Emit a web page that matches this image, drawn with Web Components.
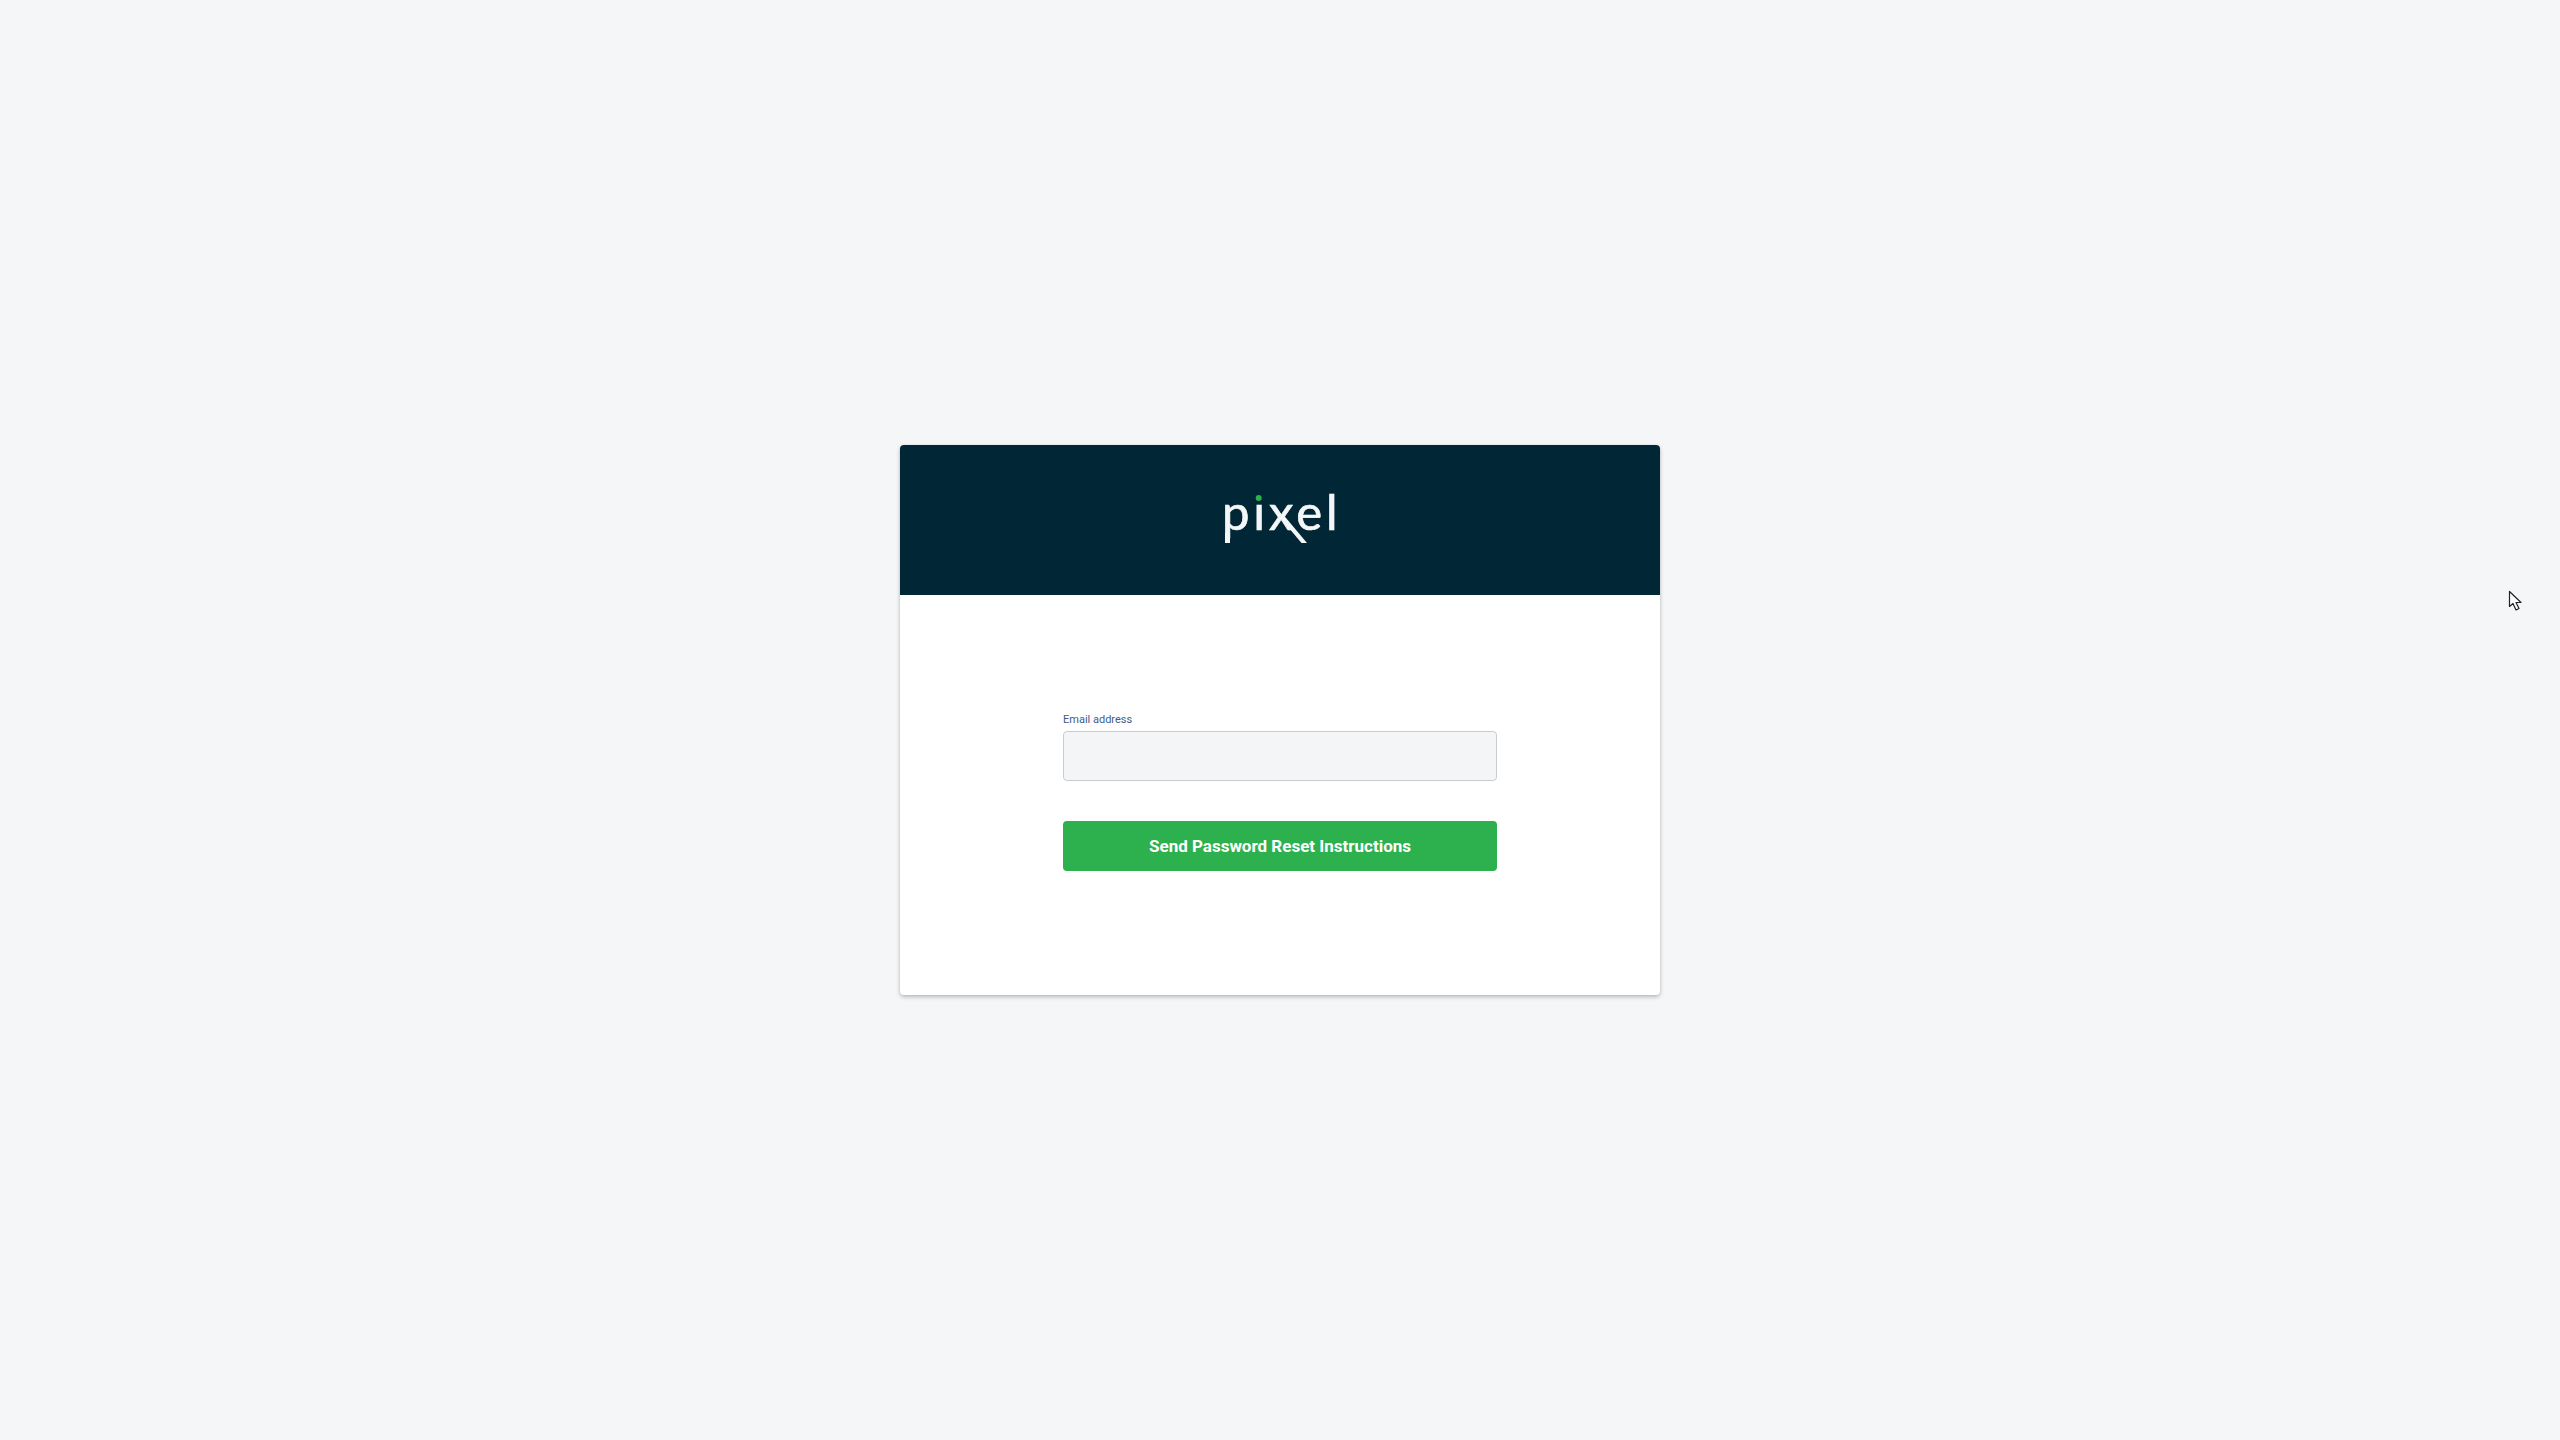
<!DOCTYPE html>
<html><head><meta charset="utf-8"><title>Pixel</title>
<style>
html,body{margin:0;height:100%;background:#f4f6f8}
body{display:flex;align-items:center;justify-content:center;height:100vh;overflow:hidden}
</style></head><body>
<reset-card>
  <pixel-logo slot="header"></pixel-logo>
  <text-field label="Email address"></text-field>
  <primary-button>Send Password Reset Instructions</primary-button>
</reset-card>
<mouse-cursor></mouse-cursor>
<script>
class ResetCard extends HTMLElement{constructor(){super();this.attachShadow({mode:'open'}).innerHTML=`<style>
:host{display:flex;flex-direction:column;width:760px;height:550px;background:#fff;border-radius:4px;box-shadow:0 2px 4px rgba(0,0,0,.24),0 0 2px rgba(0,0,0,.1);overflow:hidden}
header{height:150px;background:#012635;display:flex;justify-content:center;align-items:flex-start}
main{flex:1;padding:117px 163px 0;display:flex;flex-direction:column;gap:40px}
</style><header><slot name="header"></slot></header><main><slot></slot></main>`}}
class PixelLogo extends HTMLElement{constructor(){super();this.attachShadow({mode:'open'}).innerHTML=`<style>
:host{display:block;position:relative;width:112px;height:150px}
span{position:absolute;left:-2px;top:36px;font:400 49px/60px Lato,sans-serif;color:#f4f7f7;-webkit-text-stroke:.7px #f4f7f7;letter-spacing:3.9px;white-space:nowrap}
svg{position:absolute;left:0;top:0}
</style><span>pixel</span><svg width="112" height="150">
<rect x="1" y="88" width="5" height="10" fill="#f4f7f7"/>
<polygon points="54,70 59.500,70 83,98 77.500,98" fill="#f4f7f7"/>
<rect x="29" y="44" width="12" height="13" fill="#012635"/>
<circle cx="34.700" cy="53" r="3" fill="#2db14e"/></svg>`}}
class TextField extends HTMLElement{constructor(){super();this.attachShadow({mode:'open'}).innerHTML=`<style>
:host{display:flex;flex-direction:column;gap:3px}
label{font:400 11px/16px Roboto,sans-serif;color:#3f5c88}
input{box-sizing:border-box;width:434px;height:50px;margin:0;padding:0 12px;background:#f4f5f7;border:1px solid #c9cdd1;border-radius:4px;outline:none}
</style><label for="f"></label><input id="f" type="email">`;this.shadowRoot.querySelector('label').textContent=this.getAttribute('label')}}
class PrimaryButton extends HTMLElement{constructor(){super();this.attachShadow({mode:'open'}).innerHTML=`<style>
:host{display:block}
button{display:block;width:434px;height:50px;border:0;border-radius:4px;background:#2db14e;color:#fff;font:700 17px Roboto,sans-serif;padding:0;cursor:pointer}
</style><button><slot></slot></button>`}}
class MouseCursor extends HTMLElement{constructor(){super();this.attachShadow({mode:'open'}).innerHTML=`<style>
:host{position:fixed;left:2507px;top:589px;width:18px;height:24px}
</style><svg width="18" height="24" viewBox="0 0 18 24"><path d="M2.500 2.500V17.500l3.500-3 3 6.500 3-1.500-3-6h5z" fill="#fff" stroke="#222" stroke-width="1.200" stroke-linejoin="round"/></svg>`}}
customElements.define('reset-card',ResetCard);
customElements.define('pixel-logo',PixelLogo);
customElements.define('text-field',TextField);
customElements.define('primary-button',PrimaryButton);
customElements.define('mouse-cursor',MouseCursor);
</script>
</body></html>
